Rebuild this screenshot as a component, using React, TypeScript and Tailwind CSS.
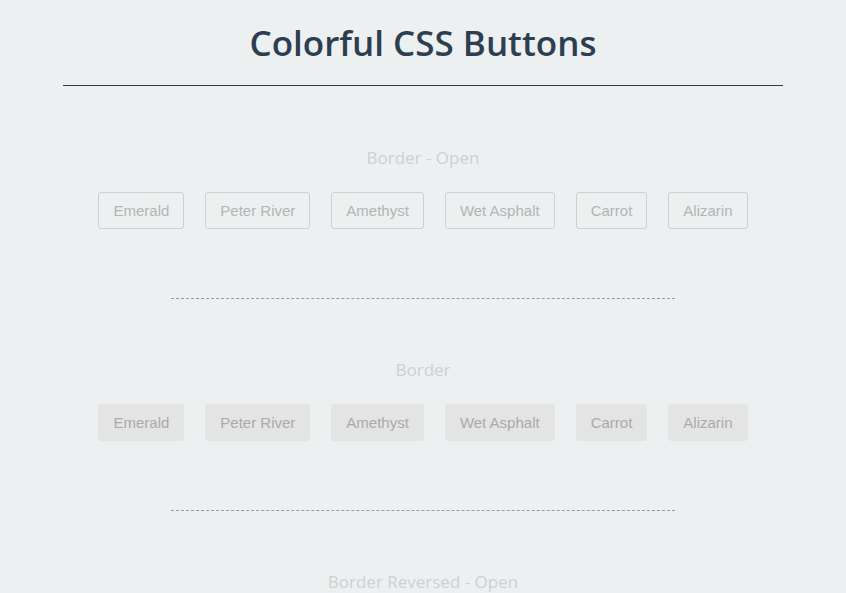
const colors = ["Emerald", "Peter River", "Amethyst", "Wet Asphalt", "Carrot", "Alizarin"];

const Section = ({ title, filled, last }: { title: string; filled?: boolean; last?: boolean }) => {
  return (
    <section className="flex flex-col items-center">
      <h2 className="text-[17px] leading-6 text-[#cdd1d2] font-['Open_Sans',sans-serif]">{title}</h2>
      {!last && (
        <>
          <div className="mt-[22px] flex gap-[21px]">
            {colors.map((c) => (
              <button
                key={c}
                className={
                  filled
                    ? "h-[37px] px-[14px] pt-px rounded-[3px] border border-[#e4e4e4] bg-[#e4e4e4] text-[15px] text-[#aaaaaa] font-['Liberation_Sans',Arial,sans-serif]"
                    : "h-[37px] px-[14px] pt-px rounded-[3px] border border-[#cfcfcf] text-[15px] text-[#b4b4b4] font-['Liberation_Sans',Arial,sans-serif]"
                }
              >
                {c}
              </button>
            ))}
          </div>
          <div className="mt-[69px] mb-[59px] w-[504px] border-t border-dashed border-[#949ca6]"></div>
        </>
      )}
    </section>
  );
};

export default function App() {
  return (
    <div className="min-h-screen bg-[#ecf0f1] font-['Open_Sans',sans-serif]">
      <div className="w-[720px] mx-auto">
        <header className="pt-[20px] pb-[19px] border-b border-[#2c3e50] text-center">
          <h1 className="text-[35px] leading-[46px] font-semibold text-[#2c3e50]">Colorful CSS Buttons</h1>
        </header>
        <div className="pt-[60px]">
          <Section title="Border - Open" />
          <Section title="Border" filled />
          <Section title="Border Reversed - Open" last />
        </div>
      </div>
    </div>
  );
}
